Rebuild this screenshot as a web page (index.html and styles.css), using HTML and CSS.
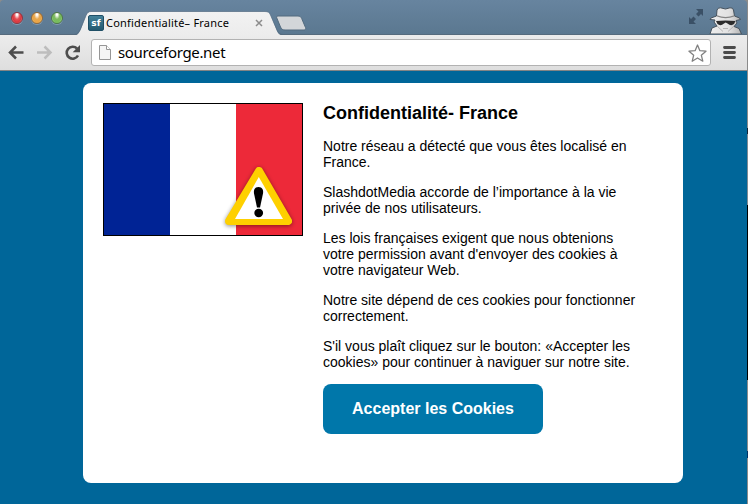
FILE: index.html
```html
<!DOCTYPE html>
<html lang="fr">
<head>
<meta charset="utf-8">
<title>Confidentialité- France</title>
<link rel="stylesheet" href="styles.css">
</head>
<body>
<div class="window">
  <header class="tabstrip">
    <svg class="tab-shape" width="236" height="25" viewBox="0 0 236 25">
      <defs><linearGradient id="tabfill" x1="0" y1="0" x2="0" y2="1"><stop offset="0" stop-color="#f2f2f2"/><stop offset="1" stop-color="#ececec"/></linearGradient></defs>
      <path d="M0 25C4 24 5 22 6.500 19L12 4.500C13.500 1.500 14.500.500 17 .500H191C194 .500 195.500 1.500 196.500 4L203 20C204 23 206 24 209 25Z" fill="url(#tabfill)"/>
      <path d="M0 23.500C4 23 5 21 6.500 18L12 4.500C13.500 1.500 14.500.500 17 .500H191C194 .500 195.500 1.500 196.500 4L203 19C204 22 206 23 209 23.500" fill="none" stroke="#526b82" stroke-opacity=".7"/>
      <path d="M204 5H224C226 5 227 6 227.700 7.500L231.500 16.500C232 18 231.500 19 230 19H211C208.500 19 207.500 18 206.500 16L202.800 7C202.400 6 202.500 5 204 5Z" fill="#d3d6d9" stroke="#526a7e"/>
    </svg>
    <div class="lights"><i class="light red"></i><i class="light amber"></i><i class="light green"></i></div>
    <div class="tab">
      <span class="favicon">sf</span>
      <span class="tab-title">Confidentialité– France</span>
      <svg class="close" width="8" height="8" viewBox="0 0 8 8"><path d="M1 1l6 6M7 1L1 7" stroke="#8c8c8c" stroke-width="1.500"/></svg>
    </div>
    <svg class="expand" width="14" height="15" viewBox="0 0 14 15" fill="#3a5066"><path d="M7 0h7v7l-2-2-2.500 2.500L7 5l2.500-2.500zM0 8l2 2 2.500-2.500L7 10l-2.500 2.500L7 15H0z"/></svg>
    <svg class="spy" width="35" height="27" viewBox="0 0 35 27">
      <defs><linearGradient id="hat" x1="0" x2="1"><stop offset="0" stop-color="#ededed"/><stop offset=".6" stop-color="#e2e2e2"/><stop offset="1" stop-color="#b4b4b4"/></linearGradient></defs>
      <path d="M2 27L4 21 9 19 6 15 7 13 2 12.500 3 11 8.500 9 9 3Q10 .500 12.500.800L17.500 2 22 .800Q25 .500 25.500 3L26.500 9 31.500 11 32.500 12.500 28 13.500 29 16 26 19.500 31 21.500 33.500 27Z" fill="url(#hat)" stroke="#46525d" stroke-width="1"/>
      <path d="M9 8.300Q17.500 11.500 26.300 8.300V9.400Q17.500 13 9 9.400Z" fill="#858585"/>
      <path d="M8 14Q17.500 13 27.500 14L26 17Q23 19.500 19.500 16.500L17.700 15.500 16 16.500Q12.500 19.500 9.500 17Z" fill="#2c2c2c"/>
      <path d="M9 19l6 5.500M26 19l-6 5.500M15 21.500h5" stroke="#aaa" stroke-width=".8" fill="none"/>
    </svg>
  </header>
  <nav class="toolbar">
    <svg class="nav-icons" width="74" height="22" viewBox="0 0 74 22" fill="none">
      <path d="M17 10.500H4M9.500 4.500L3.500 10.500l6 6" transform="translate(-.5)" stroke="#4d4d4d" stroke-width="2.500"/>
      <path d="M30 10.500h13M37.500 4.500l6 6-6 6" stroke="#bdbdbd" stroke-width="2.500"/>
      <path d="M70 6.500A6 6 0 1 0 71 13.500" stroke="#4d4d4d" stroke-width="2.600"/><path d="M73 3v7.300h-7.300z" fill="#4d4d4d"/>
    </svg>
    <div class="omnibox">
      <svg class="page-icon" width="12" height="15" viewBox="0 0 12 15"><path d="M.500.500H7.500L11.500 4.500V14.500H.500Z" fill="#f5f5f5" stroke="#969696"/><path d="M7.500.500V4.500H11.500" fill="#fff" stroke="#969696"/></svg>
      <span class="url">sourceforge.net</span>
      <svg class="star" width="19" height="18" viewBox="0 0 19 18"><path d="M9.500 1l2.400 5.700 6.100.500-4.700 4 1.500 6L9.500 14l-5.300 3.200 1.500-6L1 7.200l6.100-.5z" fill="#fff" stroke="#818181" stroke-width="1.300" stroke-linejoin="round"/></svg>
    </div>
    <svg class="menu" width="13" height="13" viewBox="0 0 13 13"><path d="M1.500 1.500h10M1.500 6.500h10M1.500 11.500h10" stroke="#4b4b4b" stroke-width="2.800" stroke-linecap="round"/></svg>
  </nav>
  <main class="page">
    <section class="card">
      <div class="flag">
        <i class="band blue"></i><i class="band white"></i><i class="band crimson"></i>
        <svg class="warning" width="72" height="66" viewBox="0 0 72 66">
          <path d="M36 6L65 56H6Z" fill="#fed000" stroke="#fed000" stroke-width="8" stroke-linejoin="round"/>
          <path d="M35.800 12L60 54H12Z" fill="#fff"/>
          <path d="M35.500 22C39.500 22 40.500 25 40 28.500L37 42.500H34L31 28.500C30.500 25 31.500 22 35.500 22Z"/><ellipse cx="35.700" cy="48" rx="4.400" ry="4.200"/>
        </svg>
      </div>
      <div class="copy">
        <h1>Confidentialité- France</h1>
        <p>Notre réseau a détecté que vous êtes localisé en<br>France.</p>
        <p>SlashdotMedia accorde de l’importance à la vie<br>privée de nos utilisateurs.</p>
        <p>Les lois françaises exigent que nous obtenions<br>votre permission avant d'envoyer des cookies à<br>votre navigateur Web.</p>
        <p>Notre site dépend de ces cookies pour fonctionner<br>correctement.</p>
        <p>S'il vous plaît cliquez sur le bouton: «Accepter les<br>cookies» pour continuer à naviguer sur notre site.</p>
        <button class="accept">Accepter les Cookies</button>
      </div>
    </section>
  </main>
</div>
</body>
</html>
```
FILE: styles.css
```css
* { box-sizing: border-box; }
body { margin: 0; background: linear-gradient(#8b8b8b 0 128px, #123 128px 134px, #808a92 134px 205px, #000 205px 380px, #8b8b8b 380px 451px, #036 451px 458px, #8b8b8b 458px) no-repeat; height: 504px; font-family: "Liberation Sans", Arial, sans-serif; color: #000; overflow: hidden; }
.window { width: 747px; height: 504px; display: flex; flex-direction: column; }
.tabstrip { position: relative; height: 35px; display: flex; align-items: flex-start; background: linear-gradient(#67849f, #5b7890); border-bottom: 1px solid #566b7d; border-radius: 4px 4px 0 0; }
.tab-shape { position: absolute; left: 74px; top: 11px; }
.lights { display: flex; gap: 8px; padding: 12px 0 0 11px; width: 88px; }
.light { width: 12px; height: 12px; border-radius: 50%; border: 1px solid #666; box-shadow: 0 1px 0 #829bb0; }
.red { background: radial-gradient(ellipse at 50% 15%, #fff 0 8%, #e54e55 40%, #d9363d 65%, #ffb3b0); border-color: #8d3740; }
.amber { background: radial-gradient(ellipse at 50% 15%, #fff 0 8%, #e9a84e 40%, #eba444 65%, #fff0a0); border-color: #93683a; }
.green { background: radial-gradient(ellipse at 50% 15%, #fff 0 8%, #7eb95f 40%, #76bd5c 65%, #d9ffb5); border-color: #4e7747; }
.tab { position: relative; display: flex; align-items: center; height: 16px; margin-top: 15px; }
.favicon { width: 16px; height: 16px; border-radius: 2px; background: linear-gradient(#438199, #235970); border: 1px solid #1f4f66; color: #fff; font: bold 9px/14px "DejaVu Sans", sans-serif; text-align: center; }
.tab-title { margin-left: 2px; width: 149px; font: 11px/16px "Noto Sans", sans-serif; letter-spacing: .2px; white-space: nowrap; }
.expand { margin: 9px 0 0 auto; }
.spy { margin: 7px 4px 0 5px; }
.toolbar { position: relative; height: 36px; display: flex; align-items: center; background: linear-gradient(#ececec, #dedede); border-bottom: 1px solid #848484; }
.nav-icons { margin-left: 7px; }
.omnibox { display: flex; align-items: center; margin-left: 10px; width: 620px; height: 27px; background: #fff; border: 1px solid #b2b2b2; border-radius: 3px; padding: 0 3px 0 7px; }
.url { margin: 0 0 2px 7px; font: 15px/20px "Noto Sans", sans-serif; letter-spacing: -.33px; }
.star { margin-left: auto; }
.menu { margin-left: 12px; }
.page { flex: 1; background: #006699; padding: 12px 0 0 83px; }
.card { width: 600px; height: 400px; display: flex; align-items: flex-start; gap: 20px; padding: 20px; background: #fff; border-radius: 8px; }
.flag { position: relative; display: flex; width: 200px; height: 133px; border: 1px solid #000; }
.band { flex: 1; }
.blue { background: #002395; }
.white { background: #fff; }
.crimson { background: #ed2939; }
.warning { position: absolute; left: 119px; top: 61px; filter: drop-shadow(0 1px 2px rgba(0,0,0,.45)); }
.copy { width: 330px; }
h1 { margin: 0 0 15px; font-size: 18px; line-height: 20px; white-space: nowrap; }
p { margin: 0 0 14px; font-size: 14px; line-height: 16px; white-space: nowrap; }
.accept { display: block; width: 220px; height: 50px; padding: 0; border: 0; border-radius: 8px; background: #0077aa; color: #fff; font: bold 16px/50px "Liberation Sans", Arial, sans-serif; }
```
